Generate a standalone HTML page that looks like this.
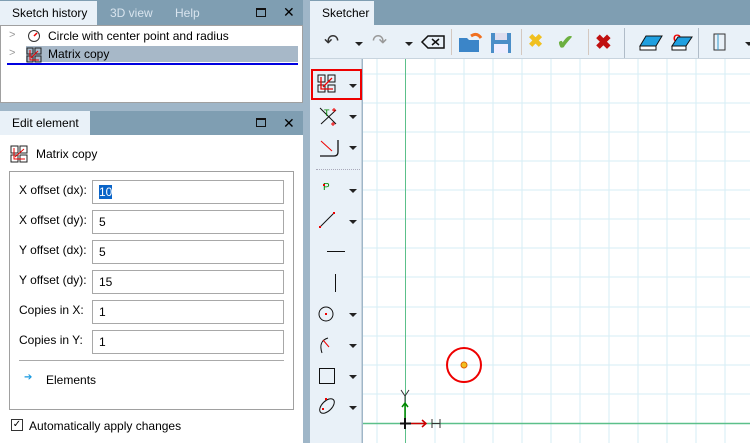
<!DOCTYPE html>
<html><head><meta charset="utf-8"><style>
*{margin:0;padding:0;box-sizing:border-box}
body{width:750px;height:443px;overflow:hidden;background:#9fb6c8;font-family:"Liberation Sans",sans-serif;font-size:12px;color:#000;position:relative}
.a{position:absolute}
.tabbar{background:#7f9eb2}
.tab{background:#e9f1f8;color:#000;padding-left:12px;line-height:24px}
.tabo{color:#d8e4ee;line-height:24px}
.inp{position:absolute;left:92px;width:192px;height:24px;border:1px solid #a8a8a8;background:#fff;padding-left:6px;line-height:22px}
.lbl{position:absolute;left:19px}
.dd{position:absolute;width:0;height:0;border-left:4px solid transparent;border-right:4px solid transparent;border-top:4px solid #222}
</style></head><body>
<!-- Sketch history -->
<div class="a tabbar" style="left:0;top:0;width:303px;height:25px"></div>
<div class="a tab" style="left:0;top:1px;width:97px;height:24px">Sketch history</div>
<div class="a tabo" style="left:110px;top:1px">3D view</div>
<div class="a tabo" style="left:175px;top:1px">Help</div>
<div class="a" style="left:256px;top:8px;width:10px;height:9px;border:1px solid #111;border-top-width:2px"></div>
<div class="a" style="left:283px;top:2px;font-size:14px;line-height:20px">✕</div>
<div class="a" style="left:0;top:25px;width:303px;height:78px;background:#fff;border:1px solid #a0a0a0"></div>
<div class="a" style="left:9px;top:29px;color:#999;font-size:11px">&gt;</div>
<svg class="a" style="left:27px;top:29px" width="14" height="14"><circle cx="7" cy="7" r="5.5" fill="none" stroke="#333"/><line x1="7" y1="7" x2="10" y2="4" stroke="#e00" stroke-width="1.5"/></svg>
<div class="a" style="left:48px;top:29px">Circle with center point and radius</div>
<div class="a" style="left:26px;top:46px;width:272px;height:16px;background:#a7b8c8"></div>
<div class="a" style="left:9px;top:47px;color:#999;font-size:11px">&gt;</div>
<svg class="a" style="left:26px;top:47px" width="16" height="16"><rect x="1" y="1" width="6" height="6" fill="none" stroke="#222"/><rect x="9" y="1" width="6" height="6" fill="none" stroke="#222"/><rect x="1" y="9" width="6" height="6" fill="none" stroke="#222"/><rect x="9" y="9" width="6" height="6" fill="none" stroke="#222"/><path d="M4 3V13H13M5 11L12 4" stroke="#e00" fill="none"/></svg>
<div class="a" style="left:48px;top:47px">Matrix copy</div>
<div class="a" style="left:7px;top:63px;width:291px;height:2px;background:#0000e0"></div>

<!-- Edit element -->
<div class="a tabbar" style="left:0;top:111px;width:303px;height:24px"></div>
<div class="a tab" style="left:0;top:111px;width:90px;height:24px">Edit element</div>
<div class="a" style="left:256px;top:118px;width:10px;height:9px;border:1px solid #111;border-top-width:2px"></div>
<div class="a" style="left:283px;top:113px;font-size:14px;line-height:20px">✕</div>
<div class="a" style="left:0;top:135px;width:303px;height:308px;background:#fff"></div>
<svg class="a" style="left:10px;top:145px" width="18" height="18"><rect x="1" y="1" width="7" height="7" fill="none" stroke="#222"/><rect x="10" y="1" width="7" height="7" fill="none" stroke="#222"/><rect x="1" y="10" width="7" height="7" fill="none" stroke="#222"/><rect x="10" y="10" width="7" height="7" fill="none" stroke="#222"/><path d="M4 3V14H15M5 12L14 4" stroke="#e00" fill="none"/></svg>
<div class="a" style="left:36px;top:147px">Matrix copy</div>
<div class="a" style="left:9px;top:171px;width:285px;height:239px;border:1px solid #a0a0a0"></div>
<div class="lbl" style="top:183px">X offset (dx):</div><div class="inp" style="top:180px"><span style="background:#0a64c8;color:#fff">10</span></div>
<div class="lbl" style="top:213px">X offset (dy):</div><div class="inp" style="top:210px">5</div>
<div class="lbl" style="top:243px">Y offset (dx):</div><div class="inp" style="top:240px">5</div>
<div class="lbl" style="top:273px">Y offset (dy):</div><div class="inp" style="top:270px">15</div>
<div class="lbl" style="top:303px">Copies in X:</div><div class="inp" style="top:300px">1</div>
<div class="lbl" style="top:333px">Copies in Y:</div><div class="inp" style="top:330px">1</div>
<div class="a" style="left:19px;top:360px;width:265px;border-top:1px solid #aaa"></div>
<div class="a" style="left:24px;top:372px;color:#1a9ae0;font-size:10px">➔</div>
<div class="a" style="left:46px;top:373px">Elements</div>
<div class="a" style="left:11px;top:419px;width:12px;height:12px;border:1px solid #333;font-size:10px;line-height:10px;text-align:center">✓</div>
<div class="a" style="left:29px;top:419px">Automatically apply changes</div>

<!-- Sketcher -->
<div class="a tabbar" style="left:310px;top:0;width:440px;height:25px"></div>
<div class="a tab" style="left:310px;top:1px;width:64px;height:24px">Sketcher</div>
<div class="a" style="left:310px;top:25px;width:440px;height:34px;background:#e9f1f8;border-bottom:1px solid #c8d4de"></div>
<div class="a" style="left:324px;top:31px;font-size:18px;color:#333">↶</div><div class="dd" style="left:355px;top:42px"></div>
<div class="a" style="left:372px;top:31px;font-size:18px;color:#999">↷</div><div class="dd" style="left:405px;top:42px"></div>
<svg class="a" style="left:420px;top:34px" width="26" height="16"><path d="M8 2H24V14H8L2 8Z" fill="none" stroke="#111" stroke-width="1.5"/><path d="M12 5L19 11M19 5L12 11" stroke="#111" stroke-width="1.5"/></svg>
<div class="a" style="left:451px;top:29px;width:1px;height:26px;background:#d4c8c0"></div>
<svg class="a" style="left:457px;top:30px" width="26" height="24"><path d="M2 8H10L12 10H22V22H2Z" fill="#3b85c8"/><path d="M14 6Q20 2 24 8" stroke="#f07020" stroke-width="3" fill="none"/></svg>
<svg class="a" style="left:490px;top:32px" width="22" height="22"><rect x="1" y="1" width="20" height="20" fill="#4a8ec8"/><rect x="5" y="1" width="12" height="7" fill="#dde"/><rect x="4" y="12" width="14" height="9" fill="#eef"/></svg>
<div class="a" style="left:521px;top:29px;width:1px;height:26px;background:#d4c8c0"></div>
<div class="a" style="left:528px;top:31px;font-size:18px;color:#f0c020;font-weight:bold">✖</div>
<div class="a" style="left:557px;top:30px;font-size:20px;color:#6cb040;font-weight:bold">✔</div>
<div class="a" style="left:588px;top:29px;width:1px;height:26px;background:#d4c8c0"></div>
<div class="a" style="left:595px;top:30px;font-size:20px;color:#c01010;font-weight:bold">✖</div>
<div class="a" style="left:624px;top:28px;width:1px;height:30px;background:#b0bcc8"></div>
<svg class="a" style="left:638px;top:34px" width="26" height="18"><path d="M8 2H24L18 12H2Z" fill="#20a0e0" stroke="#111"/><path d="M2 12H18V16H2Z" fill="#fff" stroke="#111"/></svg>
<svg class="a" style="left:668px;top:31px" width="26" height="22"><text x="5" y="11" fill="#e00" font-size="11" font-family="Liberation Sans" font-weight="bold">C</text><path d="M10 6H24L18 15H4Z" fill="#20a0e0" stroke="#111"/><path d="M4 15H18V19H4Z" fill="#fff" stroke="#111"/></svg>
<div class="a" style="left:698px;top:28px;width:1px;height:30px;background:#b0bcc8"></div>
<svg class="a" style="left:713px;top:32px" width="14" height="20"><rect x="1" y="2" width="11" height="16" fill="none" stroke="#333"/><line x1="5" y1="2" x2="5" y2="18" stroke="#39c"/></svg>
<div class="dd" style="left:745px;top:42px"></div>

<!-- tool column -->
<div class="a" style="left:310px;top:59px;width:52px;height:384px;background:#e9f1f8;border-right:1px solid #c8d4de"></div>
<div class="a" style="left:311px;top:69px;width:51px;height:31px;border:2px solid #e00"></div>
<svg class="a" style="left:317px;top:74px" width="20" height="20"><rect x="1" y="1" width="7" height="7" fill="none" stroke="#111"/><rect x="11" y="1" width="7" height="7" fill="none" stroke="#111"/><rect x="1" y="11" width="7" height="7" fill="none" stroke="#111"/><rect x="11" y="11" width="7" height="7" fill="none" stroke="#111"/><path d="M4 3V15H16M6 13L15 4" stroke="#e00" fill="none" stroke-width="1.3"/></svg>
<div class="dd" style="left:349px;top:84px"></div>
<svg class="a" style="left:318px;top:106px" width="22" height="22"><path d="M2 2L18 18M18 4L3 18" stroke="#111"/><text x="6" y="10" fill="#080" font-size="9" font-family="Liberation Sans">T</text><path d="M14 4h4M16 2v4M13 18h4M15 16v4" stroke="#e00"/></svg>
<div class="dd" style="left:349px;top:115px"></div>
<svg class="a" style="left:318px;top:138px" width="22" height="20"><path d="M2 18H16Q20 18 20 14V2" stroke="#111" fill="none" stroke-width="1.3"/><path d="M3 3L14 13" stroke="#e00"/></svg>
<div class="dd" style="left:349px;top:146px"></div>
<div class="a" style="left:316px;top:169px;width:44px;border-top:1px dotted #aab"></div>
<div class="a" style="left:323px;top:182px;font-size:10px;color:#080">P</div><div class="a" style="left:323px;top:184px;width:2px;height:2px;background:#e00"></div>
<div class="dd" style="left:349px;top:189px"></div>
<svg class="a" style="left:318px;top:211px" width="18" height="18"><path d="M2 16L16 2" stroke="#111"/><rect x="1" y="15" width="2" height="2" fill="#e00"/><rect x="15" y="1" width="2" height="2" fill="#e00"/></svg>
<div class="dd" style="left:349px;top:220px"></div>
<div class="a" style="left:327px;top:251px;width:18px;height:1px;background:#111"></div>
<div class="a" style="left:335px;top:274px;width:1px;height:18px;background:#111"></div>
<svg class="a" style="left:318px;top:305px" width="18" height="18"><circle cx="8" cy="9" r="7" fill="none" stroke="#111"/><rect x="7" y="8" width="2" height="2" fill="#e00"/></svg>
<div class="dd" style="left:349px;top:313px"></div>
<svg class="a" style="left:318px;top:335px" width="18" height="20"><path d="M4 18Q0 6 10 3" fill="none" stroke="#111"/><path d="M5 5L11 12" stroke="#e00"/></svg>
<div class="dd" style="left:349px;top:344px"></div>
<div class="a" style="left:319px;top:368px;width:16px;height:16px;border:1px solid #111"></div>
<div class="dd" style="left:349px;top:375px"></div>
<svg class="a" style="left:317px;top:396px" width="20" height="20"><ellipse cx="10" cy="10" rx="9" ry="5" transform="rotate(-45 10 10)" fill="none" stroke="#111"/><rect x="8" y="2" width="2" height="2" fill="#e00"/><rect x="5" y="12" width="2" height="2" fill="#e00"/></svg>
<div class="dd" style="left:349px;top:406px"></div>

<!-- canvas -->
<svg class="a" style="left:363px;top:59px" width="387" height="384">
<rect width="387" height="384" fill="#fff"/>
<g stroke="#d6eef6" stroke-width="1">
<line x1="14" y1="0" x2="14" y2="384"/><line x1="72" y1="0" x2="72" y2="384"/><line x1="101" y1="0" x2="101" y2="384"/><line x1="130" y1="0" x2="130" y2="384"/><line x1="159" y1="0" x2="159" y2="384"/><line x1="188" y1="0" x2="188" y2="384"/><line x1="217" y1="0" x2="217" y2="384"/><line x1="246" y1="0" x2="246" y2="384"/><line x1="275" y1="0" x2="275" y2="384"/><line x1="304" y1="0" x2="304" y2="384"/><line x1="333" y1="0" x2="333" y2="384"/><line x1="362" y1="0" x2="362" y2="384"/>
<line x1="0" y1="15" x2="387" y2="15"/><line x1="0" y1="44" x2="387" y2="44"/><line x1="0" y1="73" x2="387" y2="73"/><line x1="0" y1="102" x2="387" y2="102"/><line x1="0" y1="131" x2="387" y2="131"/><line x1="0" y1="160" x2="387" y2="160"/><line x1="0" y1="189" x2="387" y2="189"/><line x1="0" y1="218" x2="387" y2="218"/><line x1="0" y1="248" x2="387" y2="248"/><line x1="0" y1="277" x2="387" y2="277"/><line x1="0" y1="306" x2="387" y2="306"/><line x1="0" y1="335" x2="387" y2="335"/>
</g>
<line x1="42.5" y1="0" x2="42.5" y2="384" stroke="#5cc08a"/>
<line x1="0" y1="364.5" x2="387" y2="364.5" stroke="#5cc08a" stroke-width="1.5"/>
<circle cx="101" cy="306" r="17" fill="none" stroke="#e00" stroke-width="2"/>
<circle cx="101" cy="306" r="3" fill="#f0c020" stroke="#e06000"/>
<path d="M38 331L42 337L46 331M42 337V345" stroke="#333" fill="none"/>
<path d="M42 364V344M39 348L42 344L45 348" stroke="#080" fill="none" stroke-width="1.5"/>
<path d="M37 364.5H48" stroke="#111" stroke-width="2"/><path d="M42 359V370" stroke="#111" stroke-width="2"/>
<path d="M48 364.5H63M59 361L63 364.5L59 368" stroke="#c00" fill="none" stroke-width="1.5"/>
<path d="M69 360V369M77 360V369M69 364.5H77" stroke="#333" fill="none"/>
</svg>
</body></html>
